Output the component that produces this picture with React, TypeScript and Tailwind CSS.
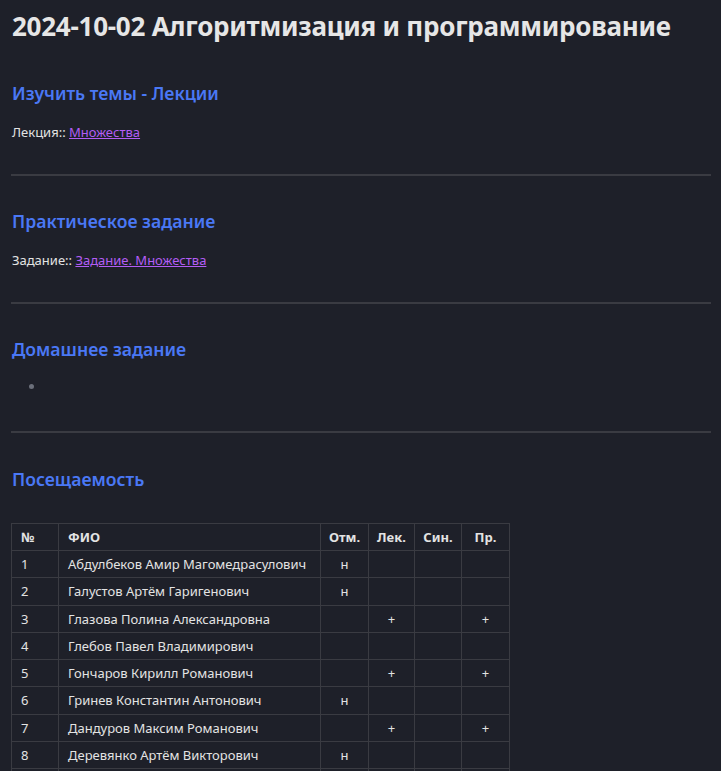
import React from "react";

const rows: [string, string, string, string, string, string][] = [
  ["1", "Абдулбеков Амир Магомедрасулович", "н", "", "", ""],
  ["2", "Галустов Артём Гаригенович", "н", "", "", ""],
  ["3", "Глазова Полина Александровна", "", "+", "", "+"],
  ["4", "Глебов Павел Владимирович", "", "", "", ""],
  ["5", "Гончаров Кирилл Романович", "", "+", "", "+"],
  ["6", "Гринев Константин Антонович", "н", "", "", ""],
  ["7", "Дандуров Максим Романович", "", "+", "", "+"],
  ["8", "Деревянко Артём Викторович", "н", "", "", ""],
  ["", "", "", "", "", ""],
];

function H2({ children, className }: { children: React.ReactNode; className: string }) {
  return (
    <h2 className={"text-[17.6px] leading-[24px] font-semibold text-[#4a78f5] " + className}>{children}</h2>
  );
}

function Hr({ className }: { className: string }) {
  return <div className={"h-[2px] bg-[#3a3b42] " + className} />;
}

export default function App() {
  return (
    <div
      className="h-[771px] bg-[#1e2029] text-[#e3e3e3] pl-[11px] pr-[10px] pt-[10px] overflow-hidden"
      style={{ fontFamily: '"Noto Sans", "Open Sans", sans-serif' }}
    >
      <h1 className="text-[26px] leading-[32px] font-bold text-[#e6e6e6] pl-[1px] tracking-[-0.25px]">
        2024-10-02 Алгоритмизация и программирование
      </h1>

      <H2 className="mt-[39px] pl-[1px]">Изучить темы - Лекции</H2>
      <p className="mt-[17px] text-[13px] leading-[20px] pl-[1px]">
        Лекция:: <a className="text-[#b35df5] underline" href="#">Множества</a>
      </p>
      <Hr className="mt-[32px]" />

      <H2 className="mt-[33px] pl-[1px]">Практическое задание</H2>
      <p className="mt-[17px] text-[13px] leading-[20px] pl-[1px]">
        Задание:: <a className="text-[#b35df5] underline" href="#">Задание. Множества</a>
      </p>
      <Hr className="mt-[32px]" />

      <H2 className="mt-[33px] pl-[1px]">Домашнее задание</H2>
      <ul className="mt-[15px] text-[13px] leading-[20px] pl-[18px]">
        <li className="flex items-center h-[20px]">
          <span className="block w-[5px] h-[5px] rounded-full bg-[#6b6f7a]" />
        </li>
      </ul>
      <Hr className="mt-[35px]" />

      <H2 className="mt-[34px] pl-[1px]">Посещаемость</H2>

      <table className="mt-[32px] border-collapse text-[13px] leading-[20px]">
        <thead>
          <tr className="font-semibold">
            <th className="border border-[#3a3b42] h-[27px] w-[47px] text-left pl-[9px]">№</th>
            <th className="border border-[#3a3b42] h-[27px] w-[262px] text-left pl-[9px]">ФИО</th>
            <th className="border border-[#3a3b42] h-[27px] w-[48px] text-center">Отм.</th>
            <th className="border border-[#3a3b42] h-[27px] w-[46px] text-center">Лек.</th>
            <th className="border border-[#3a3b42] h-[27px] w-[47px] text-center">Син.</th>
            <th className="border border-[#3a3b42] h-[27px] w-[48px] text-center">Пр.</th>
          </tr>
        </thead>
        <tbody>
          {rows.map((r, i) => (
            <tr key={i}>
              <td className="border border-[#3a3b42] h-[27.25px] pl-[9px]">{r[0]}</td>
              <td className="border border-[#3a3b42] h-[27.25px] pl-[9px] whitespace-nowrap">{r[1]}</td>
              <td className="border border-[#3a3b42] h-[27.25px] text-center">{r[2]}</td>
              <td className="border border-[#3a3b42] h-[27.25px] text-center">{r[3]}</td>
              <td className="border border-[#3a3b42] h-[27.25px] text-center">{r[4]}</td>
              <td className="border border-[#3a3b42] h-[27.25px] text-center">{r[5]}</td>
            </tr>
          ))}
        </tbody>
      </table>
    </div>
  );
}
